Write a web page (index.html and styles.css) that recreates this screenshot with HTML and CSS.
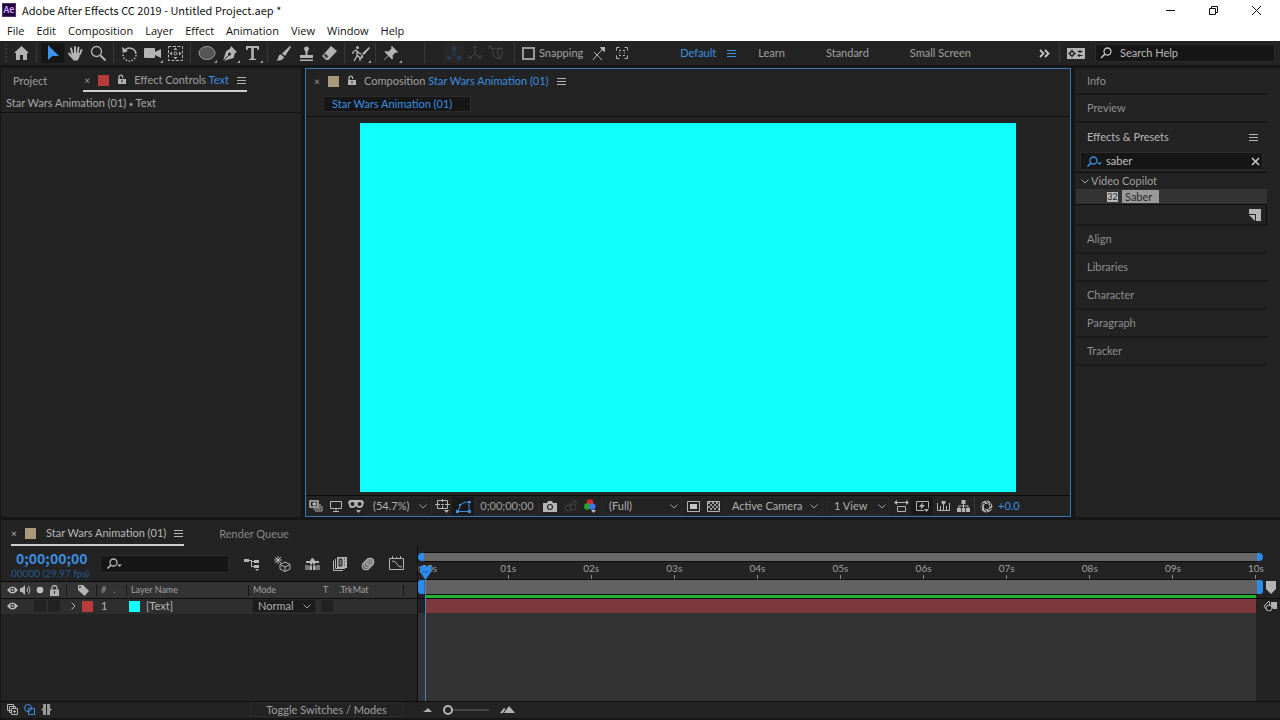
FILE: index.html
```html
<!DOCTYPE html>
<html lang="en">
<head>
    <meta charset="UTF-8">
    <title>Adobe After Effects CC 2019 - Untitled Project.aep *</title>
    <meta name="viewport" content="width=device-width, initial-scale=1.0">
    <link rel="stylesheet" href="styles.css">
</head>
<body>
    <header class="titlebar">
        <span class="app-logo">Ae</span>
        <span class="title">Adobe After Effects CC 2019 - Untitled Project.aep *</span>
        <div class="window-buttons">
            <button aria-label="Minimize"><svg width="11" height="11" viewBox="0 0 11 11"><path d="M1 5.500h9" stroke="#111"/></svg></button>
            <button aria-label="Restore"><svg width="11" height="11" viewBox="0 0 11 11" fill="none" stroke="#111"><path d="M1.500 3.500h6v6h-6zM3.500 3.500v-2h6v6h-2"/></svg></button>
            <button aria-label="Close"><svg width="11" height="11" viewBox="0 0 11 11" stroke="#111"><path d="M1 1l9 9M10 1l-9 9"/></svg></button>
        </div>
    </header>

    <nav class="menubar">
        <button>File</button>
        <button>Edit</button>
        <button>Composition</button>
        <button>Layer</button>
        <button>Effect</button>
        <button>Animation</button>
        <button>View</button>
        <button>Window</button>
        <button>Help</button>
    </nav>

    <div class="toolbar">
        <span class="grip"></span>
        <button class="tool" aria-label="Home"><svg width="17" height="16" viewBox="0 0 17 16"><path d="M8.500 1L1 8h2v7h4v-5h3v5h4V8h2z" fill="#b4b4b4"/></svg></button>
        <span class="sep"></span>
        <button class="tool active" aria-label="Selection"><svg width="14" height="18" viewBox="0 0 14 18"><path d="M2 1v15l4.500-4H13z" fill="#3b93ee"/></svg></button>
        <button class="tool" aria-label="Hand"><svg width="17" height="17" viewBox="0 0 17 17" fill="none" stroke="#b4b4b4" stroke-linecap="round" stroke-width="2"><path d="M5.500 9L4 3.500M8 8V2M10.500 8l1-5.500M13 9l1.500-4M5 12L2 8.500"/><path d="M5 8h8l-.5 4-2 3.500h-4L4 12z" fill="#b4b4b4" stroke="none"/></svg></button>
        <button class="tool" aria-label="Zoom"><svg width="17" height="17" viewBox="0 0 17 17" fill="none" stroke="#b4b4b4"><circle cx="6.500" cy="6.500" r="5" stroke-width="1.300"/><path d="M10.500 10.500l5 5" stroke-width="2"/></svg></button>
        <span class="sep"></span>
        <button class="tool" aria-label="Rotate"><svg width="17" height="17" viewBox="0 0 17 17" fill="none" stroke="#b4b4b4" stroke-width="1.500"><path d="M4 5a6.500 6.500 0 0 1 11 4"/><path d="M15 10a6.500 6.500 0 0 1-13-1" stroke-dasharray="1.500 1.500"/><path d="M1 2l1 6 5-2z" fill="#b4b4b4" stroke="none"/></svg></button>
        <button class="tool more" aria-label="Camera"><svg width="18" height="17" viewBox="0 0 18 17" fill="#b4b4b4"><rect x="0" y="3" width="11" height="10" rx="1"/><path d="M11 7l6-3v9l-6-3z"/></svg></button>
        <button class="tool" aria-label="Pan behind"><svg width="17" height="17" viewBox="0 0 17 17" fill="none" stroke="#b4b4b4"><rect x="1.500" y="1.500" width="14" height="14" stroke-dasharray="3 1.500"/><circle cx="8.500" cy="8.500" r="1.500"/><path d="M6.500 5l2-2.500 2 2.500zM6.500 12l2 2.500 2-2.500zM5 6.500L2.500 8.500l2.500 2zM12 6.500l2.500 2-2.500 2z" fill="#b4b4b4" stroke="none"/></svg></button>
        <span class="sep"></span>
        <button class="tool more" aria-label="Ellipse"><svg width="18" height="16" viewBox="0 0 18 16"><ellipse cx="9" cy="8" rx="8" ry="6.500" fill="#555" stroke="#999"/></svg></button>
        <button class="tool more" aria-label="Pen"><svg width="17" height="17" viewBox="0 0 17 17"><path d="M10 1l6 6-2 1-1.500 5L2 16l3-9.500 4-3z" fill="#b4b4b4"/><path d="M2 16l6-6" stroke="#232323"/><circle cx="8.500" cy="9" r="1.500" fill="#232323"/></svg></button>
        <button class="tool more" aria-label="Type"><svg width="15" height="16" viewBox="0 0 15 16"><path d="M1 1h13v4h-1.500L12 3H8.800v10.500l2.200.5v1H4v-1l2.200-.5V3H3l-.5 2H1z" fill="#b4b4b4"/></svg></button>
        <span class="sep"></span>
        <button class="tool" aria-label="Brush"><svg width="17" height="17" viewBox="0 0 17 17" fill="#b4b4b4"><path d="M15 1l1 1-6 9-3-2.500zM6 9.500L9 12c-1 3-4 4-8 3.500 2-1 2-2 2.500-4 .5-1.500 1.500-2 2.500-2z"/></svg></button>
        <button class="tool" aria-label="Clone stamp"><svg width="17" height="17" viewBox="0 0 17 17" fill="#b4b4b4"><path d="M6 4a2.500 2.500 0 0 1 5 0L9.500 7v3H15v3H2v-3h5.500V7zM2 14.500h13V16H2z"/></svg></button>
        <button class="tool" aria-label="Eraser"><svg width="17" height="17" viewBox="0 0 17 17"><path d="M10 1l6 5-8.500 9H5L1 11z" fill="#b4b4b4"/><path d="M2.500 10.500L5.500 13.500l2-2-3-3z" fill="#444"/></svg></button>
        <span class="sep"></span>
        <button class="tool more" aria-label="Roto brush"><svg width="19" height="17" viewBox="0 0 19 17"><path d="M5 5L2 7v2M5 5l3 3 2 1M6 6v5l-3 5M6 10l3 3v3" fill="none" stroke="#b4b4b4" stroke-width="1.400"/><circle cx="6.500" cy="2.500" r="1.500" fill="#b4b4b4"/><path d="M18 2l1 1-6 7-2-1.500zM11 9.500l1.500 1.500c-1 2.500-2 3-4 3 2-2 1-3.500 2.500-4.500z" fill="#b4b4b4"/></svg></button>
        <span class="sep"></span>
        <button class="tool more" aria-label="Puppet pin"><svg width="17" height="17" viewBox="0 0 17 17" fill="#b4b4b4"><path d="M9 1l6 6-1.500 1-1-.5-3 3 .5 3-1 1-3.500-3.500-4 4-.5-.5 4-4L1.500 7l1-1 3 .5 3-3L8 2z"/></svg></button>
        <span class="spacer-small"></span>
        <span class="sep"></span>
        <div class="axis-tools">
            <button class="tool active" aria-label="Local axis"><svg width="16" height="16" viewBox="0 0 16 16" fill="none" stroke="#24435f"><path d="M8 2v7l-5 4M8 9l5 4"/><path d="M6 4l2-3 2 3zM2 11v3h3zM14 11v3h-3z" fill="#24435f"/></svg></button>
            <button class="tool" aria-label="World axis"><svg width="16" height="16" viewBox="0 0 16 16" fill="none" stroke="#444"><path d="M8 1v8l-6 4M8 9l6 4"/><path d="M6 3l2-2 2 2M2 10v3h3M14 10v3h-3"/></svg></button>
            <button class="tool" aria-label="View axis"><svg width="16" height="16" viewBox="0 0 16 16" fill="none" stroke="#444"><path d="M4 4l2 8 6 2 2-3V3L4 4zM4 4L1 1M1 4V1h3M14 3L9 6l3 8"/></svg></button>
        </div>
        <span class="sep"></span>
        <input type="checkbox" id="snapping" class="check">
        <label for="snapping" class="snap-label">Snapping</label>
        <button class="tool" aria-label="Snap to edges"><svg width="15" height="15" viewBox="0 0 15 15" fill="none" stroke="#b4b4b4"><path d="M2 14l4-5 5 5M3 6l3 3 5-5"/><path d="M9 1h5v5l-2-1-2-2z" fill="#b4b4b4" stroke="none"/></svg></button>
        <button class="tool" aria-label="Snap to features"><svg width="14" height="14" viewBox="0 0 14 14" fill="none" stroke="#b4b4b4"><path d="M1.500 4.500v-3h3M9.500 1.500h3v3M12.500 9.500v3h-3M4.500 12.500h-3v-3"/><path d="M4 4.500h2M8 4.500h2M4 9.500h2M8 9.500h2M4 7h1M9 7h1"/></svg></button>
        <nav class="workspaces">
            <button class="current">Default</button>
            <button class="burger blue" aria-label="Workspace menu"></button>
            <button>Learn</button>
            <button>Standard</button>
            <button>Small Screen</button>
        </nav>
        <button class="tool chevrons" aria-label="More workspaces"><svg width="11" height="9" viewBox="0 0 11 9" fill="none" stroke="#c4c4c4" stroke-width="1.800"><path d="M1 1l3.500 3.500L1 8M6 1l3.500 3.500L6 8"/></svg></button>
        <span class="sep"></span>
        <button class="tool" aria-label="Sync settings"><svg width="18" height="11" viewBox="0 0 18 11"><rect width="18" height="11" fill="#b4b4b4"/><circle cx="5" cy="5.500" r="2" fill="none" stroke="#232323" stroke-width="1.500"/><path d="M5 1.500v1.500M5 8v1.500M1 5.500h1.500M7.500 5.500H9M10.500 3.500h5M10.500 7.500h5M13 2v3M12 6v3" stroke="#232323" stroke-width="1.200"/></svg></button>
        <div class="search help-search">
            <svg width="12" height="12" viewBox="0 0 12 12" fill="none" stroke="#c4c4c4"><circle cx="7.500" cy="4.500" r="3.500" stroke-width="1.300"/><path d="M5 7l-4 4" stroke-width="1.600"/></svg>
            <input type="text" aria-label="Search Help" placeholder="Search Help">
        </div>
    </div>

    <main class="workspace">
        <section class="panel effect-controls">
            <div class="tabs">
                <button class="tab-plain">Project</button>
                <div class="tab">
                    <button class="close" aria-label="Close tab">×</button>
                    <span class="swatch red"></span>
                    <svg width="9" height="12" viewBox="0 0 9 12"><path d="M2 6V3a1.800 1.800 0 0 1 3.600 0v1" fill="none" stroke="#b4b4b4" stroke-width="1.300"/><path d="M1 5h8v5H1z" fill="#b4b4b4"/><path d="M5 6v2.500" stroke="#232323"/></svg>
                    <span class="tab-name">Effect Controls <b>Text</b></span>
                    <button class="burger" aria-label="Panel menu"></button>
                </div>
            </div>
            <div class="subhead">Star Wars Animation (01) <span class="dot">•</span> Text</div>
        </section>

        <section class="panel composition">
            <div class="tabs">
                <div class="tab">
                    <button class="close" aria-label="Close tab">×</button>
                    <span class="swatch tan"></span>
                    <svg width="9" height="12" viewBox="0 0 9 12"><path d="M2 6V3a1.800 1.800 0 0 1 3.600 0v1" fill="none" stroke="#b4b4b4" stroke-width="1.300"/><path d="M1 5h8v5H1z" fill="#b4b4b4"/><path d="M5 6v2.500" stroke="#232323"/></svg>
                    <span class="tab-name">Composition <b>Star Wars Animation (01)</b></span>
                    <button class="burger" aria-label="Panel menu"></button>
                </div>
            </div>
            <div class="flow-bar"><button class="flow-chip">Star Wars Animation (01)</button></div>
            <div class="viewer"><div class="canvas"></div></div>
            <div class="viewer-bar">
                <button aria-label="Always preview"><svg width="14" height="12" viewBox="0 0 14 12" fill="none" stroke="#b4b4b4"><path d="M1 1h8v6H1z" stroke-width="1.600"/><path d="M4 3h3v2H4z" fill="#b4b4b4"/><path d="M11 4v5H4M13 6v5H6"/></svg></button>
                <button aria-label="Primary viewer"><svg width="12" height="11" viewBox="0 0 12 11" fill="none" stroke="#b4b4b4"><path d="M.5.5h11v7H.5zM6 8v2.500M3 10.500h6"/></svg></button>
                <button aria-label="VR view"><svg width="16" height="14" viewBox="0 0 16 14"><path d="M2 1h12l2 2-1 4q-1 2-3 2-3 0-4-2-1 2-4 2Q1 9 1 6L0 3z" fill="#b4b4b4"/><circle cx="4.500" cy="5" r="2" fill="#232323"/><circle cx="11.500" cy="5" r="2" fill="#232323"/><path d="M8 11h5l-2.500 3z" fill="#b4b4b4"/></svg></button>
                <select class="drop zoom-drop" aria-label="Magnification"><option>(54.7%)</option></select>
                <button aria-label="Grid and guides"><svg width="15" height="14" viewBox="0 0 15 14" fill="none" stroke="#b4b4b4"><path d="M2.500 1.500h10v8h-10zM0 5.500h5M10 5.500h5M7.500 0v3M7.500 7v3M6 5.500h3"/><path d="M9 11h5l-2.500 3z" fill="#b4b4b4" stroke="none"/></svg></button>
                <button class="pressed" aria-label="Mask visibility"><svg width="15" height="13" viewBox="0 0 15 13" fill="none" stroke="#3b8ee0"><path d="M2 11.500L4 6q2-4 9-4v9.500z"/><path d="M0 10h3v3H0zM12 10h3v3h-3zM12 1h3v2h-3zM3 4h2v2H3z" fill="#3b8ee0" stroke="none"/></svg></button>
                <button class="time-box">0;00;00;00</button>
                <button aria-label="Snapshot"><svg width="14" height="11" viewBox="0 0 14 11"><path d="M4 2l1-2h4l1 2h4v9H0V2z" fill="#b4b4b4"/><circle cx="7" cy="6" r="2.500" fill="none" stroke="#232323" stroke-width="1.200"/></svg></button>
                <button aria-label="Show snapshot"><svg width="13" height="12" viewBox="0 0 13 12" fill="none" stroke="#444"><circle cx="4" cy="8" r="3"/><circle cx="9" cy="7" r="3"/><path d="M6 5l3-4h3v3"/></svg></button>
                <button aria-label="Channels"><svg width="13" height="14" viewBox="0 0 13 14"><circle cx="6" cy="3.500" r="3.200" fill="#e0261e"/><circle cx="3.300" cy="7.500" r="3.200" fill="#24a829"/><circle cx="8.300" cy="7.500" r="3.200" fill="#4275e8"/><path d="M7 11h5l-2.500 3z" fill="#c4c4c4"/></svg></button>
                <select class="drop res-drop" aria-label="Resolution"><option>(Full)</option></select>
                <button aria-label="Region of interest"><svg width="13" height="11" viewBox="0 0 13 11"><path d="M.5.5h12v10H.5z" fill="none" stroke="#b4b4b4"/><path d="M3 3h7v5H3z" fill="#c4c4c4"/></svg></button>
                <button aria-label="Transparency grid"><svg width="13" height="11" viewBox="0 0 13 11"><path d="M.5.5h12v10H.5z" fill="none" stroke="#b4b4b4"/><path d="M1 1h2v2H1zM5 1h2v2H5zM9 1h2v2H9zM3 3h2v2H3zM7 3h2v2H7zM11 3h1v2h-1zM1 5h2v2H1zM5 5h2v2H5zM9 5h2v2H9zM3 7h2v2H3zM7 7h2v2H7zM11 7h1v2h-1z" fill="#999"/></svg></button>
                <select class="drop cam-drop" aria-label="3D view"><option>Active Camera</option></select>
                <select class="drop view-drop" aria-label="View layout"><option>1 View</option></select>
                <button aria-label="Pixel aspect ratio"><svg width="15" height="13" viewBox="0 0 15 13" fill="none" stroke="#b4b4b4"><path d="M3.500 6.500h8v5h-8zM2 2.500h11"/><path d="M3 0v5L0 2.500zM12 0v5l3-2.500z" fill="#b4b4b4" stroke="none"/></svg></button>
                <button class="pressed" aria-label="Fast previews"><svg width="15" height="13" viewBox="0 0 15 13" fill="none" stroke="#b4b4b4"><path d="M9 10.500H1.500v-9h12V8"/><path d="M8 2L4 7h2.500L5.500 10 10 5H7.500zM9 9h5l-2.500 3z" fill="#b4b4b4" stroke="none"/></svg></button>
                <button aria-label="Timeline"><svg width="13" height="12" viewBox="0 0 13 12" fill="none" stroke="#b4b4b4"><path d="M.5 3v7.500h12V3M3.500 6v4M9.500 6v4M6.500 4v6"/><path d="M4.500 1h4v2l-2 2-2-2z" fill="#b4b4b4" stroke="none"/></svg></button>
                <button aria-label="Flowchart"><svg width="13" height="12" viewBox="0 0 13 12" fill="#b4b4b4"><path d="M4.500 0h4v4h-4zM0 8h4v4H0zM4.800 8h3.400v4H4.800zM9 8h4v4H9zM6 4h1v4H6zM1.500 5.500h10v1h-10zM1.500 6h1v2h-1zM10.500 6h1v2h-1z"/></svg></button>
                <span class="bar-sep"></span>
                <button aria-label="Reset exposure"><svg width="13" height="13" viewBox="0 0 13 13" fill="none"><circle cx="6.500" cy="6.500" r="4.300" stroke="#b4b4b4" stroke-width="3.200"/><path d="M5 0l4 4M11 2l-1 5M12.500 8L8 10M8 13L4 9M1 10l1-5M0 5l5-2" stroke="#232323"/></svg></button>
                <button class="exposure">+0.0</button>
            </div>
        </section>

        <aside class="panel side">
            <button class="side-tab">Info</button>
            <button class="side-tab">Preview</button>
            <div class="effects">
                <div class="effects-head"><span>Effects &amp; Presets</span><button class="burger" aria-label="Panel menu"></button></div>
                <div class="search fx-search">
                    <svg width="16" height="11" viewBox="0 0 16 11" fill="none" stroke="#3b8ee0"><circle cx="6.500" cy="4.500" r="3.500" stroke-width="1.300"/><path d="M4 7L.5 10.500" stroke-width="1.600"/><path d="M10 6.500h5L12.500 9z" fill="#3b8ee0" stroke="none"/></svg>
                    <input type="text" aria-label="Search effects" value="saber">
                    <button class="clear" aria-label="Clear"><svg width="9" height="9" viewBox="0 0 9 9" stroke="#ccc" stroke-width="1.500"><path d="M1 1l7 7M8 1L1 8"/></svg></button>
                </div>
                <div class="fx-group"><svg width="8" height="5" viewBox="0 0 8 5" fill="none" stroke="#a8a8a8"><path d="M.5.5L4 4 7.500.5"/></svg>Video Copilot</div>
                <div class="fx-item"><span class="badge32">32</span><span class="fx-name">Saber</span></div>
                <div class="fx-foot"><button aria-label="New preset"><svg width="12" height="12" viewBox="0 0 12 12" fill="#b4b4b4"><path d="M0 0h12v12H7V5H0zM0 6h6v6z"/></svg></button></div>
            </div>
            <button class="side-tab">Align</button>
            <button class="side-tab">Libraries</button>
            <button class="side-tab">Character</button>
            <button class="side-tab">Paragraph</button>
            <button class="side-tab">Tracker</button>
        </aside>
    </main>

    <section class="timeline">
        <div class="tabs timeline-tabs">
            <div class="tab open">
                <button class="close" aria-label="Close tab">×</button>
                <span class="swatch tan"></span>
                <span class="tab-name">Star Wars Animation (01)</span>
                <button class="burger" aria-label="Panel menu"></button>
            </div>
            <button class="tab-plain">Render Queue</button>
        </div>

        <div class="timeline-body">
            <div class="layers">
                <div class="layer-tools">
                    <div class="clock">
                        <div class="timecode">0;00;00;00</div>
                        <div class="frames">00000 (29.97 fps)</div>
                    </div>
                    <div class="search layer-search">
                        <svg width="16" height="11" viewBox="0 0 16 11" fill="none" stroke="#b4b4b4"><circle cx="6.500" cy="4.500" r="3.500" stroke-width="1.300"/><path d="M4 7L.5 10.500" stroke-width="1.600"/><path d="M10 6.500h5L12.500 9z" fill="#b4b4b4" stroke="none"/></svg>
                        <input type="text" aria-label="Search layers">
                    </div>
                    <div class="switches">
                        <button aria-label="Mini-flowchart"><svg width="16" height="14" viewBox="0 0 16 14" fill="#b4b4b4"><path d="M0 2h5v3H0zM10 3h5v3h-5zM10 8h5v3h-5zM5 3h3v1h2v1H8v4h2v1H7V4H5zM11 12h4l-2 2z"/></svg></button>
                        <button aria-label="Draft 3D"><svg width="17" height="16" viewBox="0 0 17 16" fill="none" stroke="#b4b4b4"><path d="M11 6l5 2.500v4.500L11 15.500 6 13V8.500zM6 8.500l5 2.500 5-2.500M11 11v4.500"/><path d="M4 0v8M0 4h8M1 1l6 6M7 1L1 7"/></svg></button>
                        <button aria-label="Hide shy layers"><svg width="15" height="14" viewBox="0 0 15 14"><path d="M0 8h15v5H0z" fill="#777"/><path d="M5 4q2.500-6 5 0h4v2h-4v7H5V6H1V4z" fill="#b4b4b4"/><path d="M7.500 6v7M3 8h9" stroke="#232323"/></svg></button>
                        <button aria-label="Frame blending"><svg width="14" height="14" viewBox="0 0 14 14"><path d="M4 0h10v11H4z" fill="#b4b4b4"/><path d="M.5 3.500v10H10M2.500 2v9.500H12" fill="none" stroke="#b4b4b4"/><path d="M6 2h3v7H6zM11 2h1M11 5h1M11 8h1" fill="#777" stroke="#232323"/></svg></button>
                        <button aria-label="Motion blur"><svg width="14" height="14" viewBox="0 0 14 14" fill="#666" stroke="#b4b4b4"><circle cx="5" cy="9" r="4"/><circle cx="7" cy="7" r="4"/><circle cx="9" cy="5" r="4" fill="#888"/></svg></button>
                        <button class="graph" aria-label="Graph editor"><svg width="15" height="15" viewBox="0 0 15 15" fill="none" stroke="#b4b4b4"><path d="M.5 2.500h14v11H.5z"/><path d="M3 5q4 0 5 3 1 3 5 3"/><path d="M3.500 0v3M7.500 1v2M11.500 0v3"/></svg></button>
                    </div>
                </div>
                <table class="layer-table">
                    <colgroup><col class="c-av"><col class="c-tag"><col class="c-num"><col class="c-name"><col class="c-mode"><col class="c-t"><col class="c-trk"><col></colgroup>
                    <thead>
                        <tr>
                            <th><div class="av">
                                <svg width="11" height="8" viewBox="0 0 11 8"><path d="M0 4q5.500-7 11 0-5.500 7-11 0z" fill="#c0c0c0"/><circle cx="5.500" cy="4" r="2.200" fill="#333"/><circle cx="5.500" cy="4" r="1" fill="#c0c0c0"/></svg>
                                <svg width="12" height="10" viewBox="0 0 12 10" fill="none" stroke="#b4b4b4"><path d="M0 3h2l3-3v10L2 7H0z" fill="#b4b4b4" stroke="none"/><path d="M7 3q1.500 2 0 4M8.500 1q3 4 0 8"/></svg>
                                <svg width="8" height="8" viewBox="0 0 8 8"><circle cx="4" cy="4" r="3.300" fill="#c0c0c0"/></svg>
                                <svg width="9" height="11" viewBox="0 0 9 11"><path d="M2 5V3a2.500 2.500 0 0 1 5 0v2" fill="none" stroke="#b4b4b4" stroke-width="1.300"/><path d="M0 4.500h9V11H0z" fill="#b4b4b4"/><path d="M4.500 6v3" stroke="#333"/></svg>
                            </div></th>
                            <th class="center"><svg width="12" height="12" viewBox="0 0 12 12"><path d="M1 1h5l6 6-4.500 5L1 6z" fill="#b4b4b4"/><circle cx="3" cy="3" r="1" fill="#333"/></svg></th>
                            <th class="num-head"><i>#</i> &nbsp; .</th>
                            <th>Layer Name</th>
                            <th>Mode</th>
                            <th>T</th>
                            <th>.TrkMat</th>
                            <th></th>
                        </tr>
                    </thead>
                    <tbody>
                        <tr>
                            <td><div class="av">
                                <svg width="11" height="8" viewBox="0 0 11 8"><path d="M0 4q5.500-7 11 0-5.500 7-11 0z" fill="#c0c0c0"/><circle cx="5.500" cy="4" r="2.200" fill="#333"/><circle cx="5.500" cy="4" r="1" fill="#c0c0c0"/></svg>
                                <span></span>
                                <span class="well"></span>
                                <span class="well"></span>
                            </div></td>
                            <td><div class="label-cell"><svg width="5" height="8" viewBox="0 0 5 8" fill="none" stroke="#b4b4b4"><path d="M.5.5L4 4 .5 7.500"/></svg><span class="swatch red"></span></div></td>
                            <td class="num">1</td>
                            <td><div class="name-cell"><span class="swatch cyan"></span>[Text]</div></td>
                            <td><select class="drop mode-drop" aria-label="Mode"><option>Normal</option></select></td>
                            <td><span class="well"></span></td>
                            <td></td>
                            <td></td>
                        </tr>
                    </tbody>
                </table>
            </div>

            <div class="tracks">
                <div class="track nav-track"><span class="handle left"></span><span class="fill"></span><span class="handle right"></span></div>
                <div class="ruler">
                    <span>0:00s</span><span>01s</span><span>02s</span><span>03s</span><span>04s</span><span>05s</span><span>06s</span><span>07s</span><span>08s</span><span>09s</span><span>10s</span>
                </div>
                <div class="track work-track">
                    <span class="handle left"></span><span class="fill"></span><span class="handle right"></span>
                    <svg width="10" height="13" viewBox="0 0 10 13"><path d="M0 0h10v8l-5 5-5-5z" fill="#b4b4b4"/></svg>
                </div>
                <div class="cache"></div>
                <div class="layer-track">
                    <span class="layer-bar"></span>
                    <svg width="14" height="12" viewBox="0 0 14 12" fill="none" stroke="#b4b4b4"><path d="M6 1L1 6l2 3M6 1l1 5"/><circle cx="6" cy="8" r="3"/><path d="M8 2h6v7h-4L8 5z" fill="#b4b4b4" stroke="none"/></svg>
                </div>
                <div class="empty-track"></div>
                <div class="playhead"><svg width="11" height="14" viewBox="0 0 11 14"><path d="M0 0h11v6l-5.500 8L0 6z" fill="#2d8ceb"/><path d="M3 6h5" stroke="#1d5c9c"/></svg></div>
            </div>
        </div>

        <footer class="timeline-foot">
            <div class="foot-left">
                <button aria-label="Layer switches"><svg width="11" height="11" viewBox="0 0 11 11" fill="none" stroke="#b4b4b4"><path d="M.5.5h6v6h-6zM2.500 2.500h6v6h-6z"/><path d="M4.500 4.500h6v6h-6z" fill="#232323"/><path d="M7.500 6v3M6 7.500h3"/></svg></button>
                <button aria-label="Transfer controls"><svg width="11" height="11" viewBox="0 0 11 11" fill="none" stroke="#3b8ee0"><circle cx="4" cy="4" r="3.500"/><path d="M4.500 4.500h6v6h-6z"/></svg></button>
                <button aria-label="In and out"><svg width="11" height="11" viewBox="0 0 11 11" fill="#999"><path d="M2 0h3v11H2V7L0 5.500 2 4zM6 0h3v4l2 1.500L9 7v4H6z"/></svg></button>
                <button class="toggle">Toggle Switches / Modes</button>
            </div>
            <div class="foot-zoom">
                <svg width="9" height="4" viewBox="0 0 9 4" fill="#b4b4b4"><path d="M0 4l3-2 2-2 4 4z"/></svg>
                <input type="range" min="0" max="100" value="0" aria-label="Timeline zoom">
                <svg width="15" height="7" viewBox="0 0 15 7" fill="#b4b4b4"><path d="M0 7l4-5 1.500 1L3 7zM4 7l5-7 6 7z"/></svg>
            </div>
        </footer>
    </section>
</body>
</html>
```
FILE: styles.css
```css
* {
    box-sizing: border-box;
}

html, body {
    height: 100%;
    overflow: hidden;
}

body {
    margin: 0;
    display: flex;
    flex-direction: column;
    background: #161616;
    color: #a0a0a0;
    font-family: Lato, "Noto Sans", sans-serif;
    font-size: 11px;
    line-height: 14px;
}

button, input, select {
    font: inherit;
    color: inherit;
    background: none;
    border: 0;
    padding: 0;
    margin: 0;
}

button {
    cursor: pointer;
    display: flex;
    align-items: center;
    justify-content: center;
    white-space: nowrap;
}

svg {
    display: block;
    flex: none;
}

/* window chrome */
.titlebar, .menubar {
    display: flex;
    align-items: center;
    background: #fff;
    color: #111;
    font-family: "Noto Sans CJK SC", "Noto Sans", sans-serif;
    font-size: 11px;
}

.titlebar {
    height: 20px;
    padding-left: 2px;
}

.app-logo {
    width: 14px;
    height: 14px;
    margin-right: 6px;
    background: #1f0040;
    border: 1px solid #50306e;
    color: #c9a0f0;
    font-size: 9px;
    font-weight: bold;
    line-height: 11px;
    text-align: center;
}

.title {
    padding-bottom: 1px;
}

.window-buttons {
    display: flex;
    margin-left: auto;
    padding-right: 2px;
}

.window-buttons button {
    width: 43px;
    height: 20px;
}

.menubar {
    height: 21px;
    padding-left: 7px;
    gap: 12px;
    font-family: "Open Sans", "Noto Sans", sans-serif;
}

/* toolbar */
.toolbar {
    display: flex;
    align-items: center;
    height: 24px;
    padding: 0 5px;
    background: #232323;
}

.grip {
    width: 2px;
    height: 18px;
    margin-right: 3px;
    border-left: 2px dotted #3a3a3a;
}

.tool {
    width: 23px;
    height: 20px;
    flex: none;
    position: relative;
}

.tool.active {
    background: #161616;
}

.more::after {
    content: "";
    position: absolute;
    right: 1px;
    bottom: 0;
    border-left: 3px solid transparent;
    border-bottom: 3px solid #a0a0a0;
}

.sep {
    width: 1px;
    height: 20px;
    margin: 0 4px 0 3px;
    background: #383838;
    flex: none;
}

.spacer-small {
    width: 18px;
}

.axis-tools {
    display: flex;
    margin: 0 5px 0 14px;
}

.axis-tools .tool {
    width: 21px;
}

.axis-tools .active {
    background: #272727;
}

.check {
    appearance: none;
    width: 13px;
    height: 13px;
    margin: 0 4px 0 3px;
    border: 2px solid #999;
}

.snap-label {
    margin-right: 4px;
}

.workspaces {
    display: flex;
    align-items: center;
    margin-left: 47px;
}

.workspaces button {
    margin-right: 41px;
}

.workspaces .current {
    margin-right: 11px;
    color: #3b8ee0;
}

.workspaces .burger {
    margin-right: 22px;
}

.burger {
    width: 9px;
    height: 7px;
    flex: none;
    background: repeating-linear-gradient(#b4b4b4 0 1px, transparent 1px 3px);
}

.burger.blue {
    background: repeating-linear-gradient(#3b8ee0 0 1px, transparent 1px 3px);
}

.chevrons {
    margin-left: auto;
}

.search {
    display: flex;
    align-items: center;
    height: 18px;
    background: #161616;
    border: 1px solid #2c2c2c;
    border-radius: 2px;
    color: #c0c0c0;
}

.search input {
    flex: 1;
    min-width: 0;
    outline: none;
}

.search input::placeholder {
    color: #b8b8b8;
    opacity: 1;
}

.help-search {
    width: 180px;
    margin-left: 8px;
    padding-left: 4px;
    gap: 8px;
}

/* panels */
.workspace {
    flex: 1;
    min-height: 0;
    display: flex;
    gap: 4px;
    padding: 3px 0 3px 1px;
}

.panel {
    display: flex;
    flex-direction: column;
    background: #232323;
}

.effect-controls {
    width: 300px;
}

.tabs {
    display: flex;
    height: 24px;
}

.tab {
    display: flex;
    align-items: center;
    padding: 0 1px;
}

.tab-plain {
    align-self: center;
}

.tab b {
    color: #3b8ee0;
    font-weight: normal;
}

.close {
    width: 6px;
    font-size: 10px;
}

.tab .swatch {
    margin: 0 8px;
}

.tab-name {
    margin: 0 8px;
    white-space: nowrap;
}

.swatch {
    width: 11px;
    height: 11px;
    flex: none;
}

.red {
    background: #b73b3b;
}

.tan {
    background: #a89a7a;
}

.cyan {
    background: #10ffff;
}

.effect-controls .tab-plain {
    margin: 0 36px 0 12px;
    padding-top: 2px;
}

.effect-controls .tab {
    border-bottom: 2px solid #d0d0d0;
    padding-top: 2px;
}

.subhead {
    height: 21px;
    padding: 4px 5px;
    border-bottom: 1px solid #111;
    color: #a8a8a8;
}

.dot {
    font-size: 7px;
}

.composition {
    flex: 1;
    min-width: 0;
    border: 1px solid #3a77b5;
}

.composition .tab {
    padding-left: 8px;
}

.flow-bar {
    height: 24px;
    padding: 3px 17px;
    border-bottom: 1px solid #111;
}

.flow-chip {
    width: 148px;
    height: 16px;
    padding-left: 8px;
    justify-content: flex-start;
    background: #161616;
    border: 1px solid #2a2a2a;
    color: #3b8ee0;
}

.viewer {
    flex: 1;
    min-height: 0;
    display: flex;
    justify-content: center;
    padding: 6px 0 3px;
}

.canvas {
    height: 100%;
    aspect-ratio: 16 / 9;
    background: #10ffff;
}

.viewer-bar {
    display: flex;
    align-items: center;
    height: 21px;
    border-top: 1px solid #0c0c0c;
}

.viewer-bar button {
    width: 20px;
    height: 18px;
    flex: none;
}

.viewer-bar .pressed {
    background: #191919;
    width: 22px;
}

.viewer-bar .time-box {
    width: 64px;
    margin: 0 1px;
    border: 1px solid #2a2a2a;
}

.viewer-bar .exposure {
    width: auto;
    margin-left: 2px;
    color: #3b8ee0;
}

.bar-sep {
    width: 1px;
    height: 18px;
    margin: 0 1px;
    background: #383838;
}

.drop {
    appearance: none;
    height: 18px;
    border: 1px solid #2a2a2a;
    background: url("data:image/svg+xml,%3Csvg xmlns='http://www.w3.org/2000/svg' width='8' height='5' fill='none' stroke='%23a0a0a0'%3E%3Cpath d='M.5.5L4 4 7.500.5'/%3E%3C/svg%3E") no-repeat right 4px center;
    color: #b0b0b0;
}

.zoom-drop {
    width: 66px;
    padding-left: 6px;
}

.res-drop {
    width: 80px;
    padding-left: 6px;
    margin-left: 2px;
    margin-right: 1px;
    background-position: right 3px center;
}

.cam-drop {
    width: 98px;
    padding-left: 6px;
    margin: 0 4px 0 2px;
}

.view-drop {
    width: 62px;
    padding-left: 6px;
    margin-right: 2px;
    background-position: right 2px center;
}

/* right column */
.side {
    width: 205px;
    padding: 0 13px 0 1px;
}

.side-tab {
    height: 28px;
    padding-left: 11px;
    justify-content: flex-start;
    border-bottom: 2px solid #191919;
    color: #909090;
}

.side-tab:first-child {
    height: 27px;
}

.effects {
    border-bottom: 2px solid #191919;
}

.effects-head {
    display: flex;
    align-items: center;
    justify-content: space-between;
    height: 28px;
    padding: 0 9px 0 11px;
    color: #b8b8b8;
}

.fx-search {
    margin: 1px 4px 2px;
    padding: 0 2px 0 6px;
    gap: 3px;
}

.fx-group {
    display: flex;
    align-items: center;
    gap: 2px;
    height: 17px;
    padding-left: 5px;
    border-top: 1px solid #0c0c0c;
}

.fx-item {
    display: flex;
    align-items: center;
    height: 16px;
    padding-left: 31px;
    gap: 4px;
    background: #333;
    border-bottom: 1px solid #0c0c0c;
}

.badge32 {
    width: 11px;
    height: 10px;
    background: #bbb;
    color: #222;
    font-size: 9px;
    line-height: 10px;
    text-align: center;
}

.fx-name {
    width: 37px;
    padding-left: 3px;
    line-height: 13px;
    background: #999;
    color: #2a2a2a;
}

.fx-foot {
    display: flex;
    justify-content: flex-end;
    align-items: center;
    height: 19px;
    padding-right: 5px;
    border-right: 1px solid #0c0c0c;
}

/* timeline */
.timeline {
    flex: 0 0 27.5vh;
    display: flex;
    flex-direction: column;
    margin: 0 0 2px 1px;
    min-height: 0;
    background: #232323;
}

.timeline-tabs {
    height: 26px;
}

.timeline-tabs .tab {
    margin: 2px 35px 0 10px;
    padding-left: 0;
    border-bottom: 2px solid #d0d0d0;
    color: #b8b8b8;
}

.timeline-tabs .tab-plain {
    color: #888;
    padding-top: 2px;
}

.timeline-tabs .tab-name {
    margin-left: 2px;
}

.timeline-body {
    flex: 1;
    min-height: 0;
    display: flex;
}

.layers {
    width: 417px;
    flex: none;
    border-right: 1px solid #0c0c0c;
}

.layer-tools {
    display: flex;
    align-items: center;
    height: 35px;
}

.clock {
    width: 99px;
    padding-left: 10px;
    color: #24588f;
    font-size: 10px;
    line-height: 12px;
    white-space: nowrap;
}

.timecode {
    padding-left: 5px;
    color: #3b8ee0;
    font-family: "Noto Sans CJK SC", "Noto Sans", sans-serif;
    font-size: 14px;
    line-height: 18px;
    font-weight: bold;
}

.layer-search {
    width: 129px;
    padding-left: 6px;
}

.switches {
    display: flex;
    flex: 1;
    justify-content: space-between;
    padding: 0 13px 0 15px;
}

.layer-table {
    width: 100%;
    table-layout: fixed;
    border-collapse: collapse;
}

.layer-table th {
    height: 17px;
    padding: 0 0 0 4px;
    background: #333;
    border-top: 1px solid #0c0c0c;
    border-bottom: 1px solid #0c0c0c;
    font-size: 9px;
    font-weight: normal;
    line-height: 14px;
    text-align: left;
}

.layer-table td {
    height: 15px;
    padding: 0 0 0 2px;
    background: #2e2e2e;
    color: #b8b8b8;
}

.layer-table th:nth-child(-n+4), .layer-table th:nth-child(7) {
    background: linear-gradient(#161616, #161616) no-repeat right center / 1px 11px #333;
}

.c-av { width: 66px; }
.c-tag { width: 30px; }
.c-num { width: 30px; }
.c-name { width: 122px; }
.c-mode { width: 70px; }
.c-t { width: 16px; }
.c-trk { width: 69px; }

.layer-table .center svg {
    margin-left: 6px;
}

.av {
    display: grid;
    grid-template-columns: repeat(4, 14px);
    align-items: center;
    justify-items: center;
}

td .av {
    margin-left: 2px;
}

.well {
    display: block;
    width: 12px;
    height: 12px;
    background: #222;
}

.label-cell, .name-cell {
    display: flex;
    align-items: center;
    gap: 6px;
    padding-left: 2px;
}

.name-cell {
    padding-left: 0;
}

.layer-table .num {
    padding-left: 4px;
}

.mode-drop {
    display: block;
    width: 64px;
    height: 14px;
    padding-left: 5px;
    margin-left: 1px;
    line-height: 12px;
    background-color: #1c1c1c;
}

/* time ruler and layer bars */
.tracks {
    flex: 1;
    min-width: 0;
    display: flex;
    flex-direction: column;
    position: relative;
    padding-top: 6px;
    overflow: hidden;
}

.track {
    display: flex;
    align-items: center;
}

.nav-track {
    height: 10px;
    margin-right: 17px;
}

.track .fill {
    flex: 1;
    align-self: stretch;
    background: #6a6a6a;
    border: solid #0c0c0c;
    border-width: 1px 0;
}

.handle {
    width: 6px;
    align-self: stretch;
    margin: 1px 0;
    background: #2d8ceb;
}

.handle.left {
    border-radius: 5px 0 0 5px;
}

.handle.right {
    border-radius: 0 5px 5px 0;
}

.work-track .handle.left {
    border-radius: 3px 0 0 3px;
}

.work-track .handle.right {
    border-radius: 0 3px 3px 0;
}

.ruler {
    display: flex;
    justify-content: space-between;
    height: 17px;
    margin: 0 24px 0 7px;
}

.ruler span {
    width: 0;
    display: flex;
    flex-direction: column;
    align-items: center;
    line-height: 13px;
    font-size: 10px;
}

.ruler span::after {
    content: "";
    width: 1px;
    height: 4px;
    background: #888;
    flex: none;
}

.work-track {
    height: 16px;
}

.work-track .fill {
    background: #626262;
}

.work-track svg {
    margin: 0 4px 0 3px;
}

.cache {
    height: 3px;
    margin: 0 24px 0 7px;
    background: #23b52f;
}

.layer-track {
    display: flex;
    align-items: center;
    height: 15px;
    padding-left: 7px;
    border-top: 1px solid #0c0c0c;
}

.layer-bar {
    flex: 1;
    height: 14px;
    margin-right: 7px;
    background: #7d3a3c;
}

.layer-track svg {
    margin-right: 3px;
}

.empty-track {
    flex: 1;
    margin-right: 24px;
    background: #333;
}

.playhead {
    position: absolute;
    left: 2px;
    top: 20px;
    bottom: 0;
    width: 11px;
    background: linear-gradient(#3f86cc, #3f86cc) no-repeat center / 1px 100%;
}

.timeline-foot {
    display: flex;
    height: 17px;
    padding-bottom: 1px;
    border-top: 1px solid #0c0c0c;
}

.foot-left {
    display: flex;
    width: 417px;
    gap: 6px;
    padding-left: 6px;
}

.toggle {
    width: 153px;
    margin: 0 15px 0 auto;
    border: 1px solid #2c2c2c;
}

.foot-zoom {
    display: flex;
    align-items: center;
    gap: 11px;
    padding-left: 5px;
}

.foot-zoom input {
    appearance: none;
    width: 46px;
    height: 10px;
    background: linear-gradient(#444, #444) no-repeat center / 100% 2px;
}

.foot-zoom input::-webkit-slider-thumb {
    appearance: none;
    width: 10px;
    height: 10px;
    border: 2px solid #b4b4b4;
    border-radius: 50%;
    background: #232323;
}
```
